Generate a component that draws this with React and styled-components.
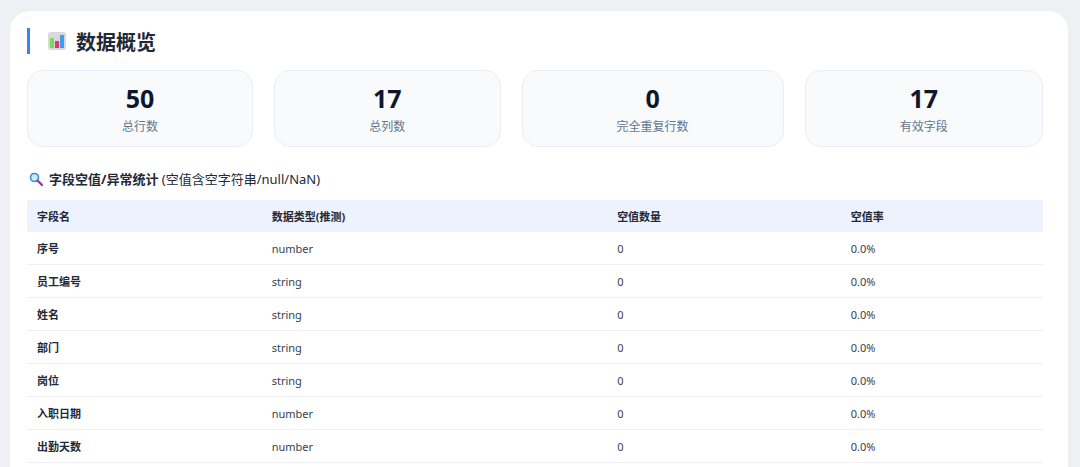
import React from "react";
import styled, { createGlobalStyle } from "styled-components";

const Global = createGlobalStyle`
  body { margin:0; background:#eef0f3; font-family: "Noto Sans","Noto Sans CJK SC",sans-serif; color:#1f2937; }
`;
const Page = styled.div`padding:11px 12px 0 10px; height:467px; box-sizing:border-box; overflow:hidden;`;
const Card = styled.div`background:#fff; border-radius:20px 20px 0 0; padding:17px 25px 0 17px; height:470px; box-sizing:border-box;`;
const Title = styled.div`display:flex; align-items:center; gap:10px; border-left:3px solid #3b82f6; padding-left:18px; height:26px; font-size:20px; font-weight:700; color:#1f2937;`;
const Stats = styled.div`display:flex; gap:21px; margin-top:16px;`;
const Stat = styled.div`flex:1 1 auto; padding:0 80px; height:77px; box-sizing:border-box; border:1px solid #e8edf6; border-radius:16px; background:#f8fafc; display:flex; flex-direction:column; align-items:center; justify-content:center;`;
const Num = styled.div`font-size:25px; font-weight:700; color:#0f172a; line-height:30px;`;
const Label = styled.div`font-size:12px; color:#64748b; margin-top:4px;`;
const Sec = styled.div`margin:22px 0 0 2px; font-size:13px; display:flex; align-items:center; gap:6px; b{font-weight:700;}`;
const Table = styled.table`width:100%; border-collapse:collapse; margin-top:12px; font-size:11px;`;
const Th = styled.th`background:#eef2fd; text-align:left; font-weight:700; height:32px; padding:0 10px; color:#1f2937;`;
const Td = styled.td`height:32px; padding:0 10px; border-bottom:1px solid #eef0f3; font-weight:${p=>p.$b?700:400}; color:${p=>p.$b?"#1f2937":"#374151"};`;

const rows=[["序号","number"],["员工编号","string"],["姓名","string"],["部门","string"],["岗位","string"],["入职日期","number"],["出勤天数","number"]];

export default function App(){
  return <><Global/><Page><Card>
    <Title>
      <svg width="18" height="18" viewBox="0 0 18 18"><rect x="0" y="0" width="18" height="18" rx="3" fill="#d8d8de"/><rect x="2" y="6" width="4" height="10" fill="#7ed957"/><rect x="7" y="9" width="4" height="7" fill="#e8336d"/><rect x="12" y="3" width="4" height="13" fill="#3aa0e8"/></svg>
      数据概览
    </Title>
    <Stats>
      {[["50","总行数"],["17","总列数"],["0","完全重复行数"],["17","有效字段"]].map(([n,l])=><Stat key={l}><Num>{n}</Num><Label>{l}</Label></Stat>)}
    </Stats>
    <Sec>
      <svg width="14" height="14" viewBox="0 0 14 14"><circle cx="5.5" cy="5.5" r="4" fill="#cfe6f7" stroke="#3a8fd0" strokeWidth="1.6"/><path d="M8.5 8.5L13 13" stroke="#8b3fa0" strokeWidth="2.4" strokeLinecap="round"/></svg>
      <span><b>字段空值/异常统计</b> (空值含空字符串/null/NaN)</span>
    </Sec>
    <Table>
      <colgroup><col style={{width:"23.1%"}}/><col style={{width:"34%"}}/><col style={{width:"23%"}}/><col/></colgroup>
      <thead><tr><Th>字段名</Th><Th>数据类型(推测)</Th><Th>空值数量</Th><Th>空值率</Th></tr></thead>
      <tbody>{rows.map(([a,b])=><tr key={a}><Td $b>{a}</Td><Td>{b}</Td><Td>0</Td><Td>0.0%</Td></tr>)}</tbody>
    </Table>
  </Card></Page></>;
}
